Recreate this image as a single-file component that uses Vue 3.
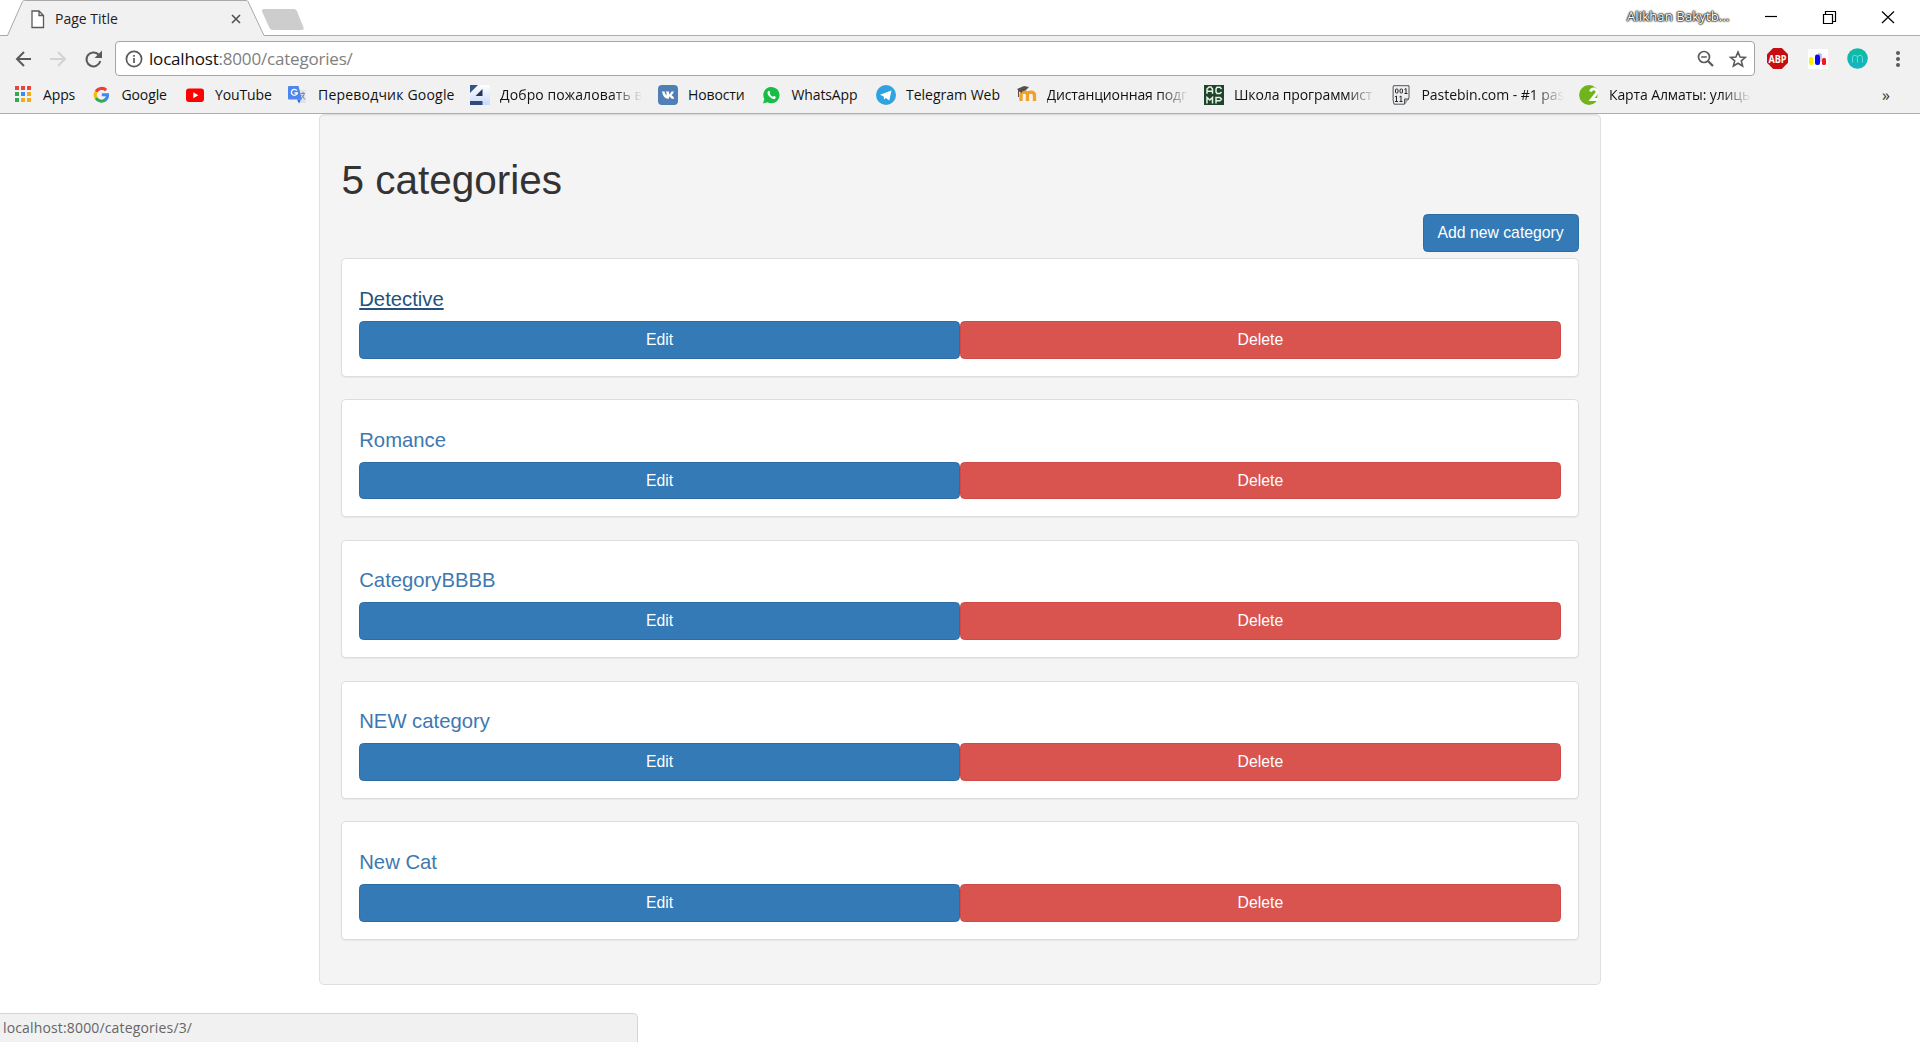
<script setup>
const bookmarks = [
  { icon: 'apps', label: 'Apps', width: 78.5 },
  { icon: 'google', label: 'Google', width: 93.5 },
  { icon: 'youtube', label: 'YouTube', width: 103 },
  { icon: 'translate', label: 'Переводчик Google', width: 182 },
  { icon: 'four', label: 'Добро пожаловать в', width: 188, fade: true },
  { icon: 'vk', label: 'Новости', width: 103.5 },
  { icon: 'whatsapp', label: 'WhatsApp', width: 114.5 },
  { icon: 'telegram', label: 'Telegram Web', width: 140.5 },
  { icon: 'moodle', label: 'Дистанционная подг', width: 187.5, fade: true },
  { icon: 'acmp', label: 'Школа программист', width: 187.5, fade: true },
  { icon: 'pastebin', label: 'Pastebin.com - #1 pas', width: 187.5, fade: true },
  { icon: 'gis', label: 'Карта Алматы: улиць', width: 188, fade: true },
]
const categories = [
  { name: 'Detective', hovered: true },
  { name: 'Romance' },
  { name: 'CategoryBBBB' },
  { name: 'NEW category' },
  { name: 'New Cat' },
]
const appColors = ['#e8453c', '#e8453c', '#e8453c', '#34a853', '#4285f4', '#f4a916', '#34a853', '#f4a916', '#f4a916']
</script>

<template>
  <div class="window">
    <header class="chrome">
      <div class="tabstrip">
        <div class="tab">
          <svg class="tab-shape" width="310" height="36" viewBox="0 0 310 36">
            <path d="M0 35.5H7.5L22.5 1.5Q23 .5 24.5 .5H246Q247.500 .5 248 1.500L264 35.500H310V36H0Z" fill="#f1f1f1" />
            <path d="M0 35.500H7.500L22.500 1.500Q23 .5 24.500 .5H246Q247.500 .5 248 1.500L264 35.500H310" fill="none" stroke="#a9a9a9" />
            <path d="M264.500 9H293.500Q296 9 297 11.300L303.500 27.500Q304.400 30 301.500 30H273Q270.300 30 269.300 27.500L262 11.500Q261 9 264.500 9Z" fill="#cdcdcd" />
          </svg>
          <svg class="file" width="14" height="19" viewBox="0 0 14 19"><path d="M1 1H8L12.500 5.500V17.500H1ZM8 1V5.500H12.500" fill="#fff" stroke="#5a5a5a" stroke-width="1.300" /></svg>
          <span class="tab-title">Page Title</span>
          <svg class="tab-close" width="10" height="10" viewBox="0 0 10 10"><path d="M1 1L9 9M9 1L1 9" stroke="#505050" stroke-width="1.600" /></svg>
        </div>
        <div class="controls">
          <span class="user">Alikhan Bakytb...</span>
          <svg width="130" height="14" viewBox="0 0 130 14" fill="none" stroke="#000" stroke-width="1.200">
            <path d="M0 6.500H12" />
            <path d="M58.500 4.500H67.500V13.500H58.500ZM60.500 4.500V1.500H70.500V11.500H67.500" />
            <path d="M117 1.500L129 13M129 1.500L117 13" />
          </svg>
        </div>
      </div>

      <div class="toolbar">
        <svg class="nav" width="90" height="20" viewBox="0 0 90 20" fill="none" stroke-width="2">
          <path d="M16 10H2M9 3L2 10L9 17" stroke="#5a5a5a" />
          <path d="M35 10H50M43 3L50 10L43 17" stroke="#d3d3d3" />
          <path d="M83.500 5.500A7 7 0 1 0 85.300 12" stroke="#5a5a5a" />
          <path d="M87 1.500V9H79.500Z" fill="#5a5a5a" />
        </svg>
        <div class="omnibox">
          <svg width="18" height="18" viewBox="0 0 18 18" fill="none" stroke="#5a5a5a"><circle cx="9" cy="9" r="7.600" stroke-width="1.700" /><path d="M9 8V13M9 5V6.700" stroke-width="1.700" /></svg>
          <span class="url"><b>localhost</b>:8000/categories/</span>
          <svg class="box-icons" width="50" height="18" viewBox="0 0 50 18" fill="none" stroke="#5a5a5a">
            <circle cx="7" cy="7" r="5.500" stroke-width="1.700" />
            <path d="M11 11L16 16" stroke-width="2.200" />
            <path d="M4.200 7H9.800" stroke-width="1.500" />
            <path d="M41 2L43.100 7L48.400 7.400L44.300 10.900L45.600 16L41 13.200L36.400 16L37.700 10.900L33.600 7.400L38.900 7Z" stroke-width="1.600" />
          </svg>
        </div>
        <div class="extensions">
          <svg width="21" height="21" viewBox="0 0 21 21"><path d="M6.200 0H14.800L21 6.200V14.800L14.800 21H6.200L0 14.800V6.200Z" fill="#c70d11" /><text x="10.500" y="14.500" text-anchor="middle" textLength="18" lengthAdjust="spacingAndGlyphs" class="abp">ABP</text></svg>
          <svg width="20" height="20" viewBox="0 0 20 20"><path fill="#fff" d="M0 0H20V20H0Z" /><rect x="1" y="8" width="4.500" height="8" rx="2" fill="#fff000" /><rect x="7" y="5.500" width="5" height="10.500" rx="2" fill="#1006ef" /><path d="M10 5H13V13" fill="none" stroke="#8e91ec" /><rect x="14" y="9" width="4" height="7" rx="1.500" fill="#f01923" /></svg>
          <svg width="21" height="21" viewBox="0 0 21 21"><defs><linearGradient id="mint" x2="0" y2="1"><stop stop-color="#0cbda0" /><stop offset="1" stop-color="#16b3c4" /></linearGradient></defs><circle cx="10.500" cy="10.500" r="10.300" fill="url(#mint)" /><path d="M5.500 14.500V9.500Q5.500 7.300 7.800 7.300Q10.500 7.300 10.500 9.500V14.500M10.500 9.500Q10.500 7.300 13 7.300Q15.500 7.300 15.500 9.500V14.500" fill="none" stroke="#62dce0" /></svg>
          <svg width="4" height="18" viewBox="0 0 4 18" fill="#5a5a5a"><circle cx="2" cy="3" r="2" /><circle cx="2" cy="9" r="2" /><circle cx="2" cy="15" r="2" /></svg>
        </div>
      </div>

      <nav class="bookmarks">
        <div v-for="b in bookmarks" :key="b.label" class="bookmark" :style="{ width: b.width + 'px' }">
          <svg width="20" height="20" viewBox="0 0 20 20">
            <g v-if="b.icon === 'apps'"><rect v-for="(c, i) in appColors" :key="i" :x="2 + (i % 3) * 6" :y="1 + Math.floor(i / 3) * 6" width="4" height="4" :fill="c" /></g>
            <g v-else-if="b.icon === 'google'" fill="none" stroke-width="3.100" transform="translate(-.5 0)">
              <path d="M14.700 5.200A6.300 6.300 0 0 0 4.600 6.800" stroke="#ea4335" />
              <path d="M4.600 6.700A6.300 6.300 0 0 0 4.600 13" stroke="#fbbc05" />
              <path d="M4.500 12.900A6.300 6.300 0 0 0 14 14.800" stroke="#34a853" />
              <path d="M13.700 14.900Q16.200 13 16 9.700H10.300" stroke="#4285f4" />
            </g>
            <g v-else-if="b.icon === 'youtube'"><rect x="1" y="3.500" width="18" height="13.500" rx="3" fill="#f00" /><path d="M8.300 7.200V13.300L13.300 10.200Z" fill="#fff" /></g>
            <g v-else-if="b.icon === 'translate'">
              <path d="M7 5H17.500V18H11Z" fill="#dfe3e8" /><path d="M9 14.500H13L11 18.500Z" fill="#3367d6" /><path d="M1 1H10.500L14 14.500H1Q0 14.500 0 13.500V2Q0 1 1 1Z" fill="#4e86ee" />
              <path d="M8.800 5.500A3 3 0 1 0 9.300 8H6.500" fill="none" stroke="#fff" stroke-width="1.300" /><path d="M12.500 8.500H17M15 7V8.500M16.300 8.500Q15.500 12 13.500 13M13.500 10L17 14.500" stroke="#788ba0" fill="none" />
            </g>
            <g v-else-if="b.icon === 'four'">
              <defs><linearGradient id="sky" x2="0" y2="1"><stop stop-color="#fff" /><stop offset="1" stop-color="#c8dbfa" /></linearGradient></defs>
              <path fill="url(#sky)" d="M0 0H20V20H0Z" /><path d="M0 0H8L0 8Z" fill="#35538d" /><path d="M12.500 4V11H5.500Z" fill="#26355d" /><path d="M0 16H12.500V20H0Z" fill="#30487b" />
            </g>
            <g v-else-if="b.icon === 'vk'"><rect width="20" height="20" rx="4" fill="#507fb5" /><path d="M4 6.500H6.400Q7.300 9.700 8.500 10.400V7.700L7.600 6.500H11V9.600Q12.500 8.700 13.500 6.500H16Q15.400 8.500 13.500 10.100Q15.500 11.500 16.300 13.700H13.600Q12.700 12.100 11 11.400V13.700H9.800Q5.300 13.400 4 6.500Z" fill="#fff" /></g>
            <g v-else-if="b.icon === 'whatsapp'" transform="translate(-.5 0)"><path d="M1.500 18.500L2.800 14A8.100 8.100 0 1 1 6 17.200Z" fill="#18bd45" /><path d="M6.500 6.300Q7.600 5.200 8.400 6.700Q9 8 8.200 8.600Q9.200 11 11.500 11.800Q12.300 10.500 13.500 11.300Q15 12.200 13.800 13.400Q11.800 15 8.400 12.100Q4.900 8.700 6.500 6.300Z" fill="#fff" /></g>
            <g v-else-if="b.icon === 'telegram'"><circle cx="10" cy="10" r="10" fill="#2fa3df" /><path d="M4 9.700L15.500 5.500L13.300 15.500L9.800 13L8 14.500L7.700 11.500Z" fill="#fff" /></g>
            <g v-else-if="b.icon === 'moodle'"><path d="M4 16V9.500Q4 7.200 7.300 7.200Q10.500 7.200 10.500 9.500V16M10.500 9.500Q10.500 7.200 13.800 7.200Q17.500 7.200 17.500 10.500V16" fill="none" stroke="#f0a02b" stroke-width="3.300" /><path d="M0 4L7 1L12 2L8.500 5.500L5 6.500V8L2 6.500V12H1V5Z" fill="#55514b" /></g>
            <g v-else-if="b.icon === 'acmp'"><path d="M0 0H20V20H0Z" fill="#20442a" /><path d="M3 8.700V4L5 2H7L8.500 4V8.700M3 6.200H8.500M17.500 4L16 2.300H13L12 4V7L13 8.500H16L17.500 7M3 18.500V12.500L5.800 15L8.500 12.500V18.500M12 18.500V12.500H16L17.500 14L16 15.800H12" fill="none" stroke="#e4f1e3" stroke-width="1.500" /></g>
            <g v-else-if="b.icon === 'pastebin'" transform="translate(-1.500 0)"><path d="M3 .7H18.500V13L14 19.200H3.500L2.600 15V2Z" fill="#eee" stroke="#50565b" /><path d="M14 19V14H18.500" fill="#aaa" stroke="#50565b" /><g fill="none" stroke="#25292d"><rect x="5" y="4" width="2.500" height="4" rx="1" /><rect x="9.500" y="4" width="2.500" height="4" rx="1" /><path d="M14 4.500L15.500 3.500V8.500M14 8.500H17M4.500 12L6 11V16.500M4.500 16.500H7.500M9 12L10.500 11V16.500M9 16.500H12" /></g></g>
            <g v-else><circle cx="10" cy="10" r="9.900" fill="#6eb41a" /><path d="M20 0V20H17Z" fill="#f1f1f1" /><path d="M11.500 6.500Q12.500 3.500 15.500 4Q19 5 17.500 8.500L12.500 14.500H19" fill="none" stroke="#fff" stroke-width="2.800" /></g>
          </svg>
          <span :class="['label', b.icon, { fade: b.fade }]">{{ b.label }}</span>
        </div>
        <span class="more">»</span>
      </nav>
    </header>

    <main class="page">
      <section class="well">
        <h1>5 categories</h1>
        <div class="actions"><button class="btn primary add">Add new category</button></div>
        <article v-for="c in categories" :key="c.name" class="panel">
          <h4><a :class="{ hovered: c.hovered }">{{ c.name }}</a></h4>
          <div class="buttons">
            <button class="btn primary">Edit</button>
            <button class="btn danger">Delete</button>
          </div>
        </article>
      </section>
    </main>
    <div class="status"><span>localhost:8000/categories/3/</span></div>
  </div>
</template>

<style>
body { margin: 0; overflow: hidden; }
</style>

<style scoped>
* { box-sizing: border-box; }
.window { position: relative; width: 1920px; height: 1042px; overflow: hidden; background: #fff; font-family: "Open Sans", "Noto Sans", sans-serif; }
svg { flex: none; }
.chrome { height: 114px; background: #f1f1f1; border-bottom: 1px solid #adadad; }
.tabstrip { height: 36px; display: flex; justify-content: space-between; background: #fff; border-bottom: 1px solid #adadad; }
.tab { position: relative; display: flex; align-items: center; width: 310px; height: 36px; padding-left: 31px; }
.tab-shape { position: absolute; left: 0; top: 0; }
.file, .tab-title, .tab-close { position: relative; }
.file { margin-top: 2px; }
.tab-title { width: 176px; margin-left: 10px; font-size: 14px; letter-spacing: 0; color: #222; white-space: nowrap; }
.tab-close { margin-top: 2px; }
.controls { display: flex; align-items: center; padding: 0 25px 2px 0; }
.user { width: 138px; margin-top: -1px; font-size: 13px; letter-spacing: .15px; color: #fff; white-space: nowrap; text-shadow: 0 0 1px #222, 0 0 1px #222, 0 0 2px #222, 0 0 2px #333, 0 0 2px #333; }
.toolbar { height: 40px; padding-top: 5px; display: flex; align-items: flex-start; }
.nav { margin: 8px 10.500px 0 14.500px; }
.omnibox { width: 1640px; height: 35px; display: flex; align-items: center; padding: 0 7px 0 9px; border: 1px solid #a5a5a5; border-radius: 4px; background: #fff; }
.url { flex: 1; margin: -1px 0 0 6px; font-size: 17px; letter-spacing: -.19px; color: #808080; white-space: nowrap; }
.url b { font-weight: 400; color: #111; }
.extensions { display: flex; align-items: center; gap: 19.500px; height: 35px; margin-left: 12px; }
.extensions svg:last-child { margin-left: 8px; }
.abp { font: 700 10px "Open Sans", sans-serif; fill: #fff; }
.bookmarks { height: 37px; display: flex; align-items: center; padding: 0 0 0 13px; }
.bookmark { flex: none; display: flex; align-items: center; gap: 10px; height: 20px; }
.label { font-size: 14px; line-height: 20px; letter-spacing: -.12px; color: #111; white-space: nowrap; }
.label.translate { letter-spacing: .2px; }
.label.four { letter-spacing: .1px; }
.label.telegram { letter-spacing: 0; }
.label.pastebin { letter-spacing: -.05px; }
.fade { width: 146px; margin-right: -10px; mask-image: linear-gradient(90deg, #000 112px, transparent 142px); }
.more { margin-left: 115px; font-size: 16px; line-height: 18px; color: #333; }
.page { width: 1282px; margin: 0 auto; font-family: "Liberation Sans", Arial, sans-serif; }
.well { height: 870.500px; padding: 21.375px; border: 1px solid #dfdfdf; border-radius: 5px; background: #f4f4f4; box-shadow: inset 0 1px 1px rgba(0, 0, 0, .05); }
h1 { margin: 21.500px 0 11.600px; font-size: 40.500px; line-height: 44.550px; font-weight: 400; color: #333; }
.actions { display: flex; justify-content: flex-end; height: 44.300px; }
.btn { flex: 1; height: 37.750px; padding: 0 13.500px; border: 1px solid #2e6da4; border-radius: 4.500px; font: 15.750px "Liberation Sans", Arial, sans-serif; color: #fff; }
.primary { background: #337ab7; }
.danger { background: #d9534f; border-color: #ce4b47; }
.add { flex: none; width: 156px; white-space: nowrap; }
.panel { height: 118.250px; margin-bottom: 22.500px; padding: 16.875px; border: 1px solid #ddd; border-radius: 4.500px; background: #fff; box-shadow: 0 1px 1px rgba(0, 0, 0, .05); }
h4 { margin: 11.650px 0 10.850px; font-size: 20.250px; line-height: 22.275px; font-weight: 400; }
h4 a { color: #3d78b0; }
h4 a.hovered { color: #23527c; text-decoration: underline; }
.buttons { display: flex; }
.status { position: absolute; left: 0; bottom: 0; width: 638px; height: 29px; padding: 4px 0 0 3px; border: 1px solid #d4d4d4; border-width: 1px 1px 0 0; border-top-right-radius: 5px; background: #f1f1f1; font-size: 14px; line-height: 20px; letter-spacing: .15px; color: #666; }
</style>
